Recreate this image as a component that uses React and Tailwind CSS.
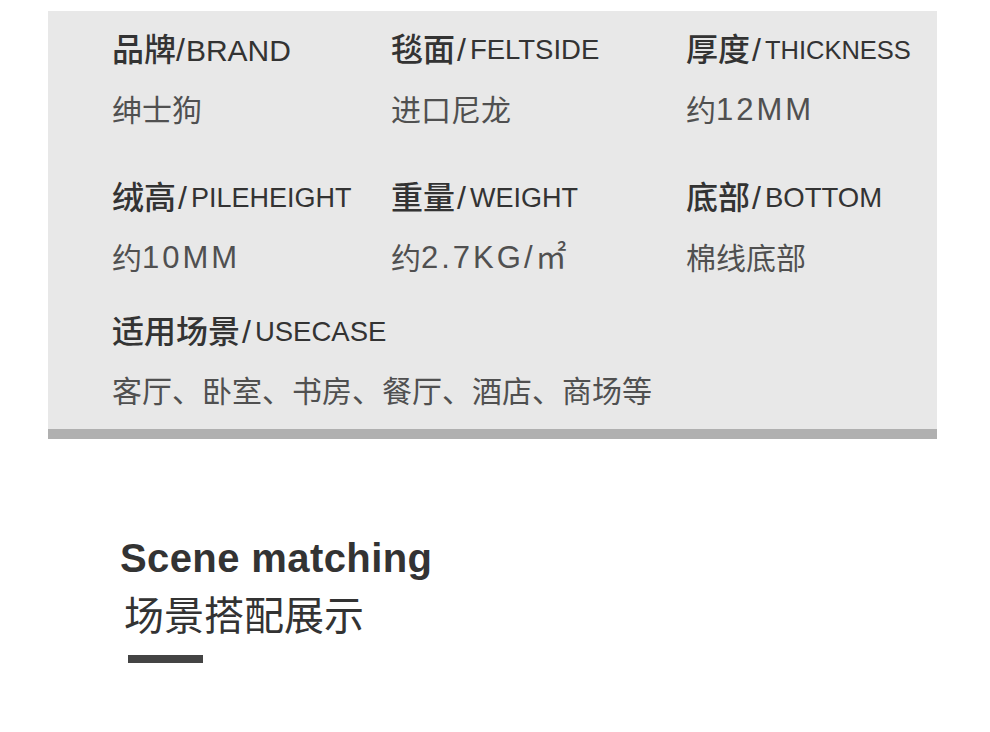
import React from 'react';

const specs = [
  [
    { cn: '品牌', en: 'BRAND', enSize: 'text-[30px]', tight: true, value: '绅士狗' },
    { cn: '毯面', en: 'FELTSIDE', enSize: 'text-[27.5px]', value: '进口尼龙' },
    { cn: '厚度', en: 'THICKNESS', enSize: 'text-[25.5px]', value: '约', num: '12MM' },
  ],
  [
    { cn: '绒高', en: 'PILEHEIGHT', enSize: 'text-[27px]', value: '约', num: '10MM' },
    { cn: '重量', en: 'WEIGHT', enSize: 'text-[27px]', value: '约', num: '2.7KG/㎡' },
    { cn: '底部', en: 'BOTTOM', enSize: 'text-[27.5px]', value: '棉线底部' },
  ],
];

const cjk = "font-['Liberation_Sans','Noto_Sans_CJK_SC',sans-serif]";

const Label = ({ cn, en, enSize, tight }) => (
  <div className="h-10 flex items-center whitespace-nowrap text-[#333]">
    <span className="text-[32px] font-medium">{cn}</span>
    <span className={`text-[32px] font-normal ${tight ? 'ml-0 mr-[1px]' : 'ml-[2px] mr-[4px]'}`}>/</span>
    <span className={`${enSize} font-normal`}>{en}</span>
  </div>
);

const Value = ({ value, num }) => (
  <div className="h-10 flex items-center whitespace-nowrap text-[30px] text-[#505050]">
    <span>{value}</span>
    {num && <span className="tracking-[3px] text-[31px]">{num}</span>}
  </div>
);

export default function App() {
  return (
    <div className={`w-[990px] h-[732px] bg-white overflow-hidden ${cjk}`}>
      <div className="pt-[11px] pl-12 w-[937px]">
        <div className="bg-[#e8e8e8] pl-16 pt-[19px] pb-[18px]">
          {specs.map((row, i) => (
            <div
              key={i}
              className={`grid grid-cols-[279px_295px_1fr] ${i === 1 ? 'mt-12' : ''}`}
            >
              {row.map((item) => (
                <div key={item.cn} className="flex flex-col gap-5">
                  <Label {...item} />
                  <Value value={item.value} num={item.num} />
                </div>
              ))}
            </div>
          ))}
          <div className="mt-[34px] flex flex-col gap-[19px]">
            <Label cn="适用场景" en="USECASE" enSize="text-[27.5px]" />
            <Value value="客厅、卧室、书房、餐厅、酒店、商场等" />
          </div>
        </div>
        <div className="h-[10px] bg-[#b0b0b0]" />
      </div>

      <div className="pl-[120px] mt-[95px]">
        <div className="text-[40px] leading-[48px] font-bold tracking-[0.4px] text-[#333]">Scene matching</div>
        <div className="mt-[10px] pl-1 text-[40px] leading-[48px] text-[#333]">场景搭配展示</div>
        <div className="mt-[15px] ml-2 w-[75px] h-2 bg-[#444]" />
      </div>
    </div>
  );
}
